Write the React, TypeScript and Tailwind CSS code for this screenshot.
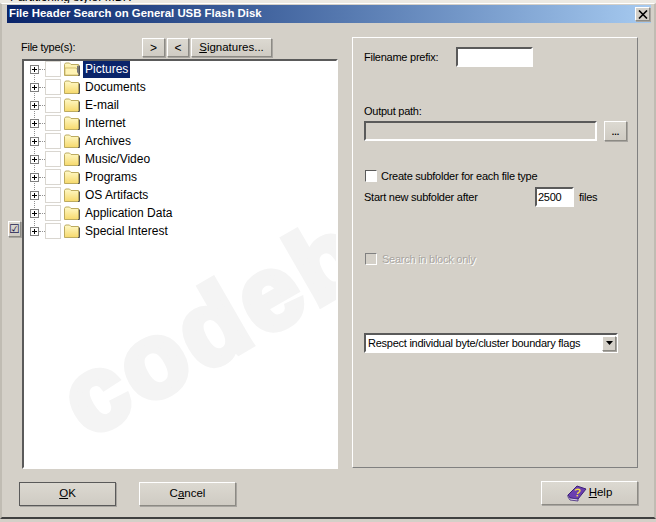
import React from "react";

const raised = "border border-t-white border-l-white border-r-[#8c8a84] border-b-[#8c8a84] shadow-[1px_1px_0_#a8a5a0]";
const sunken = "border-2 border-t-[#5a5a5a] border-l-[#5a5a5a] border-r-white border-b-white";
const sunkenThin = "border border-t-[#5a5a5a] border-l-[#5a5a5a] border-r-white border-b-white";
const rows = ["Pictures", "Documents", "E-mail", "Internet", "Archives", "Music/Video", "Programs", "OS Artifacts", "Application Data", "Special Interest"];
const label = "text-[11px] tracking-[-0.25px] whitespace-nowrap";

function Folder({ open }: { open?: boolean }) {
  return (
    <svg width="16" height="14" viewBox="0 0 16 14" className="shrink-0">
      <defs>
        <linearGradient id="fg" x1="0" y1="0" x2="0" y2="1">
          <stop offset="0" stopColor="#fff9c8" />
          <stop offset="1" stopColor="#f6d96c" />
        </linearGradient>
      </defs>
      <path d="M0.5 13.5V2.5L1.5 1H5.5L7 2.5H14.5V13.5Z" fill="url(#fg)" stroke="#bcab60" />
      <path d="M15.5 3.5V13.5H14" fill="none" stroke="#555" />
      {open && <path d="M1 6H12L14.5 9V13H1Z" fill="#fff3b4" stroke="#c0ad60" strokeWidth="0.7" />}
      {open && <path d="M13 3.5L15 4.5V13L13 10Z" fill="#777" />}
    </svg>
  );
}

function Book() {
  return (
    <svg width="20" height="17" viewBox="0 0 20 17" className="shrink-0">
      <path d="M1 10L10 1L19 4L11 14L3 13Z" fill="#6a3fb0" stroke="#3c1f78" />
      <path d="M1 10L3 13L11 14L11 16L3 15L1 12Z" fill="#d8d0ec" stroke="#3c1f78" strokeWidth="0.8" />
      <path d="M8 5.5C9 3.8 13 3.8 13 5.8C13 7.4 10.5 7.2 10.5 9" fill="none" stroke="#f3d94a" strokeWidth="1.4" />
      <rect x="9.5" y="10" width="1.6" height="1.4" fill="#f3d94a" />
    </svg>
  );
}

function Btn({ className, children }: { className: string; children: React.ReactNode }) {
  return (
    <div className={`flex items-center justify-center bg-gradient-to-b from-[#dcd9d1] to-[#cfcbc3] ${raised} ${className}`}>{children}</div>
  );
}

function Row({ text, i }: { text: string; i: number }) {
  return (
    <div className="relative flex h-[18px] items-center">
      {i < rows.length - 1 && <div className="absolute left-[10px] top-[10px] h-[18px] border-l border-dotted border-[#909090]" />}
      <div className="relative ml-[6px] flex h-[9px] w-[9px] items-center justify-center border border-[#808080] bg-white">
        <div className="absolute h-px w-[5px] bg-black" />
        <div className="absolute h-[5px] w-px bg-black" />
      </div>
      <div className="w-[6px] border-t border-dotted border-[#909090]" />
      <div className="h-[16px] w-[16px] shrink-0 border border-[#d9d6d0] bg-white" />
      <div className="ml-[3px]"><Folder open={i === 0} /></div>
      <div className={`ml-[3px] flex h-[18px] items-center px-[2px] text-[12px] ${i === 0 ? "bg-[#0a246a] text-white" : "text-black"}`}>{text}</div>
    </div>
  );
}

export default function App() {
  return (
    <div className="h-[522px] w-[656px] overflow-hidden bg-[#d4d0c8] font-['Liberation_Sans',sans-serif] text-[12px] leading-none text-black">
      <div className="h-[3px] overflow-hidden bg-[#ece9e2] pl-[10px]">
        <div className="-mt-[9px] text-[12px] leading-[12px]">Partitioning style: MBR</div>
      </div>
      <div className="h-[516px] border-x-2 border-t border-b-2 border-x-[#c0bcb3] border-t-white border-b-[#404040] px-[2px]">
        <div className="ml-[3px] mr-px mt-px flex h-[18px] items-center justify-between bg-gradient-to-r from-[#0a246a] to-[#a6caf0] pl-[2px] pr-px">
          <span className="whitespace-nowrap text-[11.4px] font-bold text-white">File Header Search on General USB Flash Disk</span>
          <div className={`flex h-[14px] w-[15px] items-center justify-center bg-[#d4d0c8] ${raised}`}>
            <svg width="10" height="9" viewBox="0 0 10 9"><path d="M1 0.5L9 8.5M9 0.5L1 8.5" stroke="#000" strokeWidth="1.6" /></svg>
          </div>
        </div>

        <div className="flex h-[492px]">
          <div className="flex w-[14px] shrink-0 flex-col pt-[198px]">
            <Btn className="ml-[4px] h-[16px] w-[13px] shrink-0 font-['DejaVu_Sans',sans-serif] text-[12px] text-[#1a1a50]">☑</Btn>
          </div>

          <div className="ml-[3px] flex w-[318px] shrink-0 flex-col pt-[14px]">
            <div className="flex h-[21px] items-center">
              <span className={`w-[121px] ${label}`}>File type(s):</span>
              <Btn className="h-[19px] w-[23px]">&gt;</Btn>
              <Btn className="ml-[2px] h-[19px] w-[22px]">&lt;</Btn>
              <Btn className="ml-[2px] h-[19px] w-[81px] text-[11.5px]"><span><span className="underline">S</span>ignatures...</span></Btn>
            </div>
            <div className={`relative ml-px mt-px h-[410px] w-[316px] overflow-hidden bg-white ${sunken}`}>
              <div className="absolute left-[64px] top-[290px] origin-[0_88px] -rotate-[30deg] whitespace-nowrap text-[104px] font-bold leading-[104px] tracking-[5px] text-[#f4f4f4] [-webkit-text-stroke:7px_#f4f4f4]">codeb</div>
              <div className="relative -mt-px">
                {rows.map((r, i) => <Row key={r} text={r} i={i} />)}
              </div>
            </div>
            <div className="mt-[13px] flex text-[11.5px]">
              <Btn className="ml-[-2px] h-[24px] w-[97px] !border-[#5a5a5a]"><span><span className="underline">O</span>K</span></Btn>
              <Btn className="ml-[23px] h-[24px] w-[97px]"><span>C<span className="underline">a</span>ncel</span></Btn>
            </div>
          </div>

          <div className="ml-[13px] flex w-[286px] shrink-0 flex-col pt-[14px]">
            <div className={`h-[431px] border border-t-white border-l-white border-r-[#808080] border-b-[#808080] pl-[11px] ${label}`}>
              <div className="mt-[9px] flex h-[20px] items-center">
                <span className="w-[92px]">Filename prefix:</span>
                <div className={`h-[20px] w-[77px] bg-white ${sunken}`} />
              </div>
              <div className="mt-[39px] h-[15px]">Output path:</div>
              <div className="flex">
                <div className={`h-[20px] w-[233px] ${sunken}`} />
                <Btn className="ml-[7px] h-[20px] w-[23px] items-end pb-[3px] text-[9px] font-bold tracking-normal">...</Btn>
              </div>
              <div className="ml-px mt-[29px] flex h-[12px] items-center">
                <div className={`h-[12px] w-[12px] bg-white ${sunkenThin}`} />
                <span className="ml-[4px]">Create subfolder for each file type</span>
              </div>
              <div className="mt-[5px] flex h-[20px] items-center">
                <span className="w-[171px]">Start new subfolder after</span>
                <div className={`flex h-[20px] w-[39px] items-center bg-white pl-px ${sunken}`}>2500</div>
                <span className="ml-[5px]">files</span>
              </div>
              <div className="ml-px mt-[46px] flex h-[12px] items-center">
                <div className="h-[12px] w-[12px] border border-t-[#808080] border-l-[#808080] border-r-white border-b-white" />
                <span className="ml-[5px] text-[#a8a5a0] [text-shadow:1px_1px_0_#fff]">Search in block only</span>
              </div>
              <div className={`mt-[68px] flex h-[20px] w-[254px] items-center justify-between bg-white pl-[2px] ${sunken}`}>
                <span>Respect individual byte/cluster boundary flags</span>
                <div className={`flex h-[15px] w-[14px] items-center justify-center bg-[#d4d0c8] ${raised}`}>
                  <svg width="7" height="4" viewBox="0 0 7 4"><path d="M0 0H7L3.5 4Z" fill="#000" /></svg>
                </div>
              </div>
            </div>
            <div className="mt-[13px] flex justify-end text-[11.5px]">
              <Btn className="h-[24px] w-[97px] gap-[2px]"><Book /><span><span className="underline">H</span>elp</span></Btn>
            </div>
          </div>
        </div>
      </div>
    </div>
  );
}
